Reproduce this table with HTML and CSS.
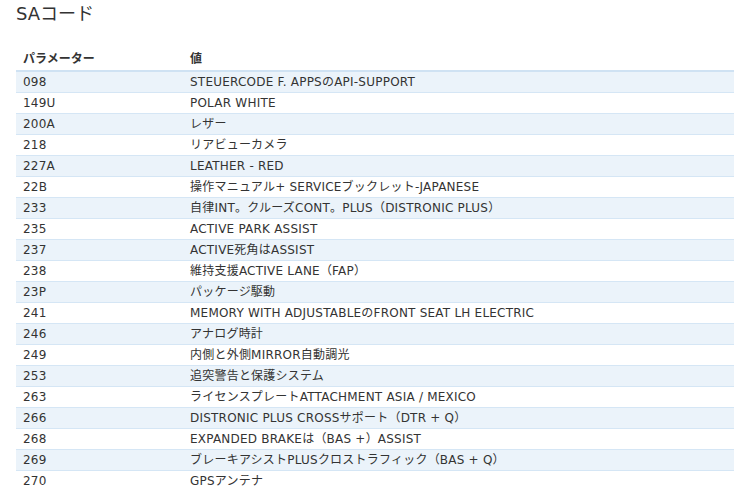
FILE: index.html
```html
<!DOCTYPE html>
<html lang="ja">
<head>
<meta charset="utf-8">
<title>SAコード</title>
<link rel="stylesheet" href="styles.css">
</head>
<body>
<h2 class="title">SAコード</h2>
<table class="codes">
<thead>
<tr><th class="c1">パラメーター</th><th>値</th></tr>
</thead>
<tbody>
<tr><td class="c1">098</td><td>STEUERCODE F. APPSのAPI-SUPPORT</td></tr>
<tr><td class="c1">149U</td><td>POLAR WHITE</td></tr>
<tr><td class="c1">200A</td><td>レザー</td></tr>
<tr><td class="c1">218</td><td>リアビューカメラ</td></tr>
<tr><td class="c1">227A</td><td>LEATHER - RED</td></tr>
<tr><td class="c1">22B</td><td>操作マニュアル+ SERVICEブックレット-JAPANESE</td></tr>
<tr><td class="c1">233</td><td>自律INT。クルーズCONT。PLUS（DISTRONIC PLUS）</td></tr>
<tr><td class="c1">235</td><td>ACTIVE PARK ASSIST</td></tr>
<tr><td class="c1">237</td><td>ACTIVE死角はASSIST</td></tr>
<tr><td class="c1">238</td><td>維持支援ACTIVE LANE（FAP）</td></tr>
<tr><td class="c1">23P</td><td>パッケージ駆動</td></tr>
<tr><td class="c1">241</td><td>MEMORY WITH ADJUSTABLEのFRONT SEAT LH ELECTRIC</td></tr>
<tr><td class="c1">246</td><td>アナログ時計</td></tr>
<tr><td class="c1">249</td><td>内側と外側MIRROR自動調光</td></tr>
<tr><td class="c1">253</td><td>追突警告と保護システム</td></tr>
<tr><td class="c1">263</td><td>ライセンスプレートATTACHMENT ASIA / MEXICO</td></tr>
<tr><td class="c1">266</td><td>DISTRONIC PLUS CROSSサポート（DTR + Q）</td></tr>
<tr><td class="c1">268</td><td>EXPANDED BRAKEは（BAS +）ASSIST</td></tr>
<tr><td class="c1">269</td><td>ブレーキアシストPLUSクロストラフィック（BAS + Q）</td></tr>
<tr><td class="c1">270</td><td>GPSアンテナ</td></tr>
</tbody>
</table>
</body>
</html>
```

FILE: styles.css
```css
html, body {
  margin: 0;
  padding: 0;
  background: #ffffff;
}
body {
  padding: 0 0 0 16px;
  font-family: "DejaVu Sans", Verdana, "Noto Sans CJK JP", sans-serif;
  color: #333333;
  font-size: 12px;
}
.title {
  margin: 3px 0 0 0;
  font-size: 18px;
  font-weight: normal;
  line-height: 22px;
  color: #333333;
}
.codes {
  margin-top: 22px;
  width: 718px;
  border-collapse: collapse;
}
.codes th {
  text-align: left;
  font-weight: bold;
  padding: 4px 7px 3px 7px;
  line-height: 16px;
  border-bottom: 2px solid #cfe2f3;
}
.codes td {
  padding: 2px 7px 2px 7px;
  line-height: 16px;
  letter-spacing: 0.22px;
  border-bottom: 1px solid #d5e6f5;
}
.codes .c1 {
  width: 153px;
}
.codes tbody tr:nth-child(odd) td {
  background: #ebf3fa;
}
```
